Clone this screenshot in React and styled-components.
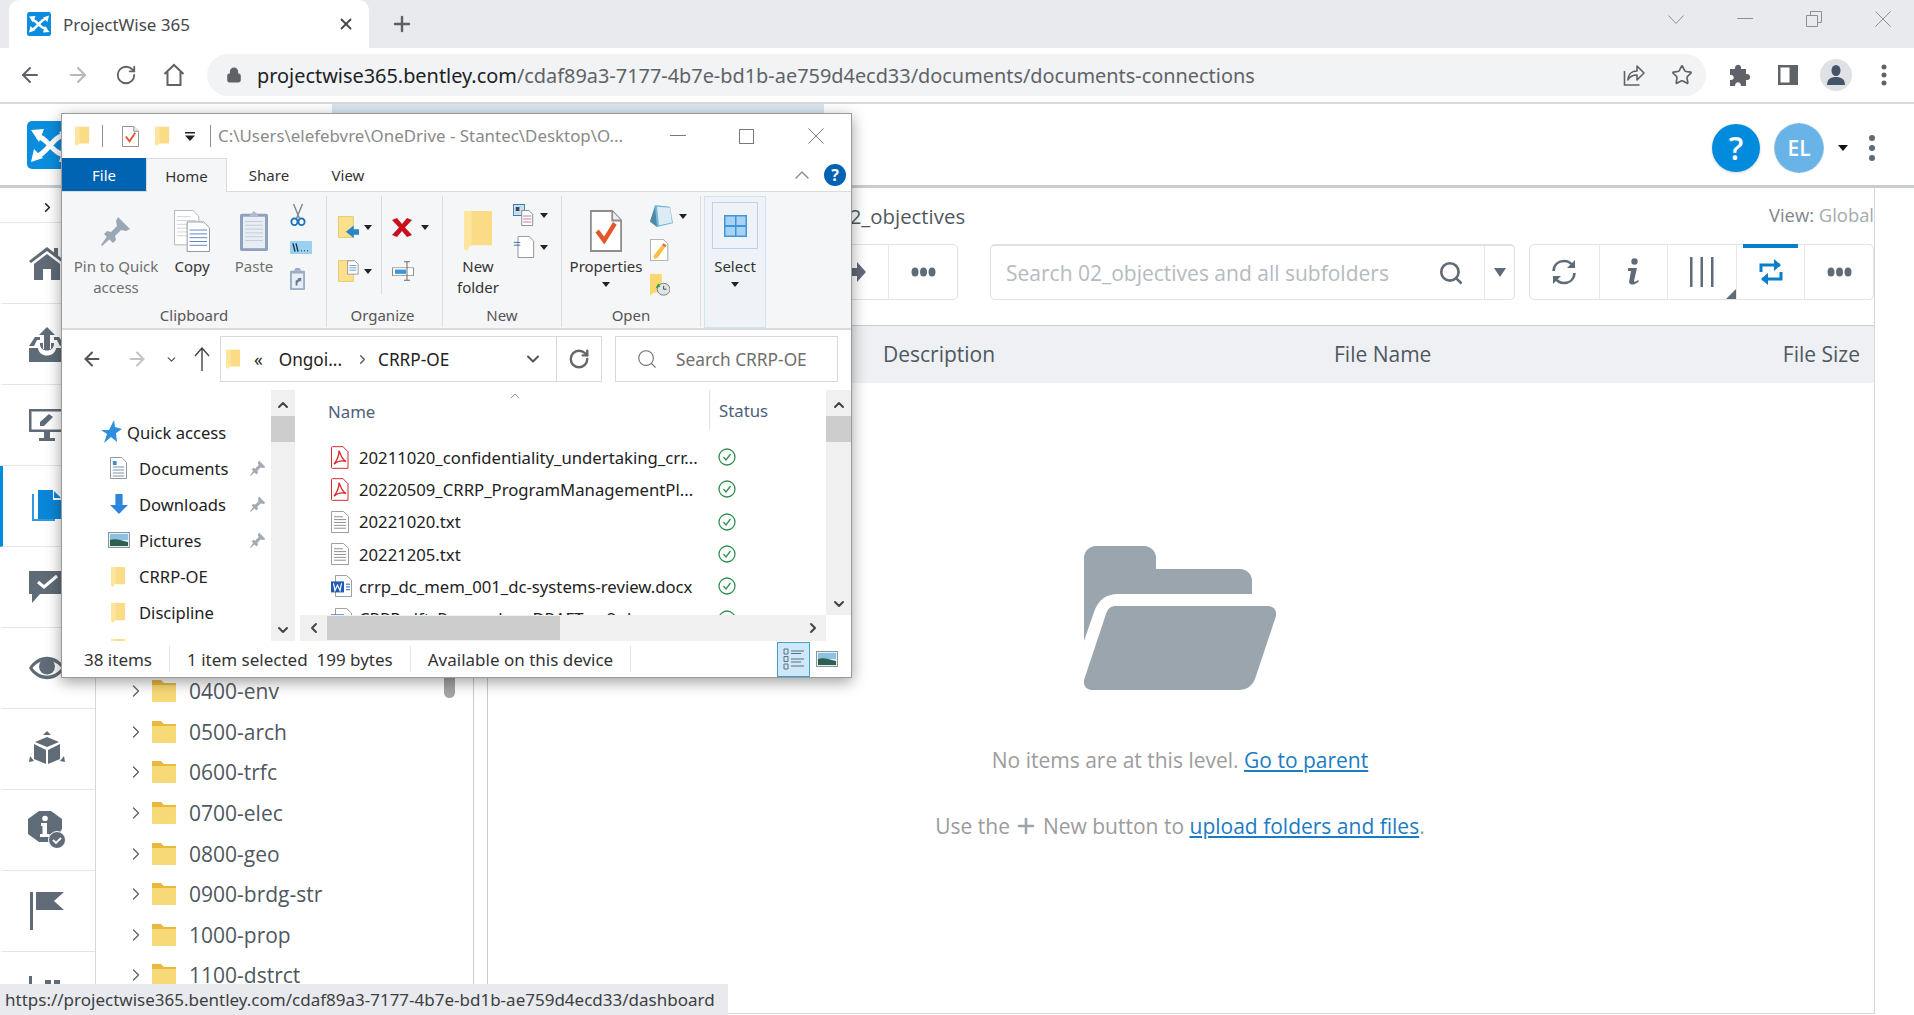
import React from 'react';
import styled, { createGlobalStyle } from 'styled-components';
import { ArrowLeft, ArrowRight, RotateCw, ChevronRight, ChevronDown, ChevronUp, ChevronLeft, Star, Lock, X, Plus, Search } from 'lucide-react';

const Global = createGlobalStyle`
  html, body { margin: 0; padding: 0; background: #fff; overflow: hidden; }
  * { box-sizing: border-box; }
  #root { width: 1914px; height: 1015px; }
`;

const SEGOE = `'Noto Sans', 'Open Sans', sans-serif`;
const OPEN = `'Open Sans', 'Noto Sans', sans-serif`;

const Screen = styled.div`
  position: relative;
  width: 1914px;
  height: 1015px;
  display: flex;
  flex-direction: column;
  overflow: hidden;
  font-family: ${OPEN};
  background: #fff;
`;

/* browser chrome */
const TabStrip = styled.div`
  height: 48px;
  background: #e8eaed;
  display: flex;
  align-items: stretch;
  padding-left: 9px;
  flex: none;
`;
const Tab = styled.div`
  width: 360px;
  background: #fff;
  border-radius: 10px 10px 0 0;
  display: flex;
  align-items: center;
  padding-left: 18px;
  gap: 12px;
  font-family: ${SEGOE};
  font-size: 17px;
  color: #45494e;
`;
const TabTitle = styled.span`
  flex: 1;
`;
const TabClose = styled.span`
  display: flex;
  margin-right: 14px;
  color: #44474a;
`;
const NewTab = styled.span`
  display: flex;
  align-items: center;
  margin-left: 21px;
  color: #5a5e63;
`;
const WindowButtons = styled.div`
  margin-left: auto;
  margin-right: -3px;
  display: flex;
  align-items: flex-start;
  padding-top: 11px;
  color: #8d9095;
`;
const WinBtn = styled.span`
  width: 69px;
  height: 16px;
  display: flex;
  align-items: center;
  justify-content: center;
`;
const BrowserBar = styled.div`
  height: 56px;
  flex: none;
  display: flex;
  align-items: flex-start;
  padding: 6px 6px 0;
  background: #fff;
  border-bottom: 2px solid #dadada;
`;
const BarBtn = styled.span`
  width: 48px;
  height: 42px;
  flex: none;
  display: flex;
  align-items: center;
  justify-content: center;
  color: ${(p) => p.$color || '#5f6368'};
`;
const Omnibox = styled.div`
  width: 1499px;
  height: 42px;
  margin: 0 10px 0 9px;
  flex: none;
  border-radius: 21px;
  background: #f1f3f4;
  display: flex;
  align-items: center;
  padding-left: 19px;
  color: #5f6368;
`;
const Url = styled.div`
  flex: 1;
  margin-left: 15px;
  font-family: ${SEGOE};
  font-size: 19.9px;
  white-space: nowrap;
  color: #5f6368;
  b { font-weight: 400; color: #202124; }
`;
const Avatar = styled.span`
  width: 32px;
  height: 32px;
  border-radius: 50%;
  background: #dfe1e5;
  display: flex;
  align-items: center;
  justify-content: center;
`;

/* projectwise page */
const AppHeader = styled.header`
  height: 84px;
  flex: none;
  display: flex;
  align-items: center;
  padding: 0 39px 0 27px;
  border-bottom: 3px solid #c9ccd1;
  position: relative;
`;
const HeaderStrip = styled.div`
  position: absolute;
  left: 332px;
  top: 0;
  width: 492px;
  height: 10px;
  background: #d9e6ef;
`;
const LogoBox = styled.div`
  width: 48px;
  height: 48px;
  display: flex;
  margin-top: 1px;
`;
const HelpCircle = styled.div`
  width: 48px;
  height: 48px;
  border-radius: 50%;
  margin-left: auto;
  background: #008bdc;
  color: #fff;
  font-size: 32px;
  font-weight: 600;
  display: flex;
  align-items: center;
  justify-content: center;
  margin-top: 6px;
  box-shadow: 0 1px 3px rgba(0, 0, 0, .18);
`;
const UserCircle = styled.div`
  width: 48px;
  height: 48px;
  border-radius: 50%;
  margin-left: 15px;
  background: #68b3e8;
  color: #fff;
  font-size: 21px;
  font-weight: 600;
  display: flex;
  align-items: center;
  justify-content: center;
  margin-top: 6px;
  box-shadow: 0 0 0 1px #8fbfe0;
`;
const UserCaret = styled.span`
  width: 0;
  height: 0;
  margin: 6px 0 0 15px;
  border-left: 5px solid transparent;
  border-right: 5px solid transparent;
  border-top: 6px solid #111;
`;
const Kebab = styled.span`
  display: flex;
  flex-direction: column;
  gap: 4px;
  margin: 6px 0 0 21px;
  i { width: 6px; height: 6px; border-radius: 50%; background: #5f6b76; }
`;
const Main = styled.div`
  flex: 1;
  display: flex;
  min-height: 0;
`;
const SideNav = styled.nav`
  width: 96px;
  flex: none;
  border-right: 1px solid #d5d7da;
  display: flex;
  flex-direction: column;
  overflow: hidden;
`;
const SideToggle = styled.div`
  height: 35px;
  flex: none;
  display: flex;
  align-items: center;
  justify-content: center;
  border-bottom: 1px solid #e3e5e8;
  color: #222;
  padding-top: 4px;
`;
const SideItem = styled.div`
  height: 81px;
  flex: none;
  display: flex;
  align-items: center;
  justify-content: center;
  border-bottom: 1px solid #e3e5e8;
  border-left: 3px solid ${(p) => (p.$active ? '#008bdc' : 'transparent')};
  padding-right: 4px;
`;
const TreePanel = styled.div`
  width: 378px;
  flex: none;
  position: relative;
  padding-top: 483px;
  border-right: 1px solid #c8cace;
  overflow: hidden;
`;
const TreeThumb = styled.div`
  position: absolute;
  right: 18px;
  top: 440px;
  width: 11px;
  height: 70px;
  border-radius: 0 0 6px 6px;
  background: #a4a4a4;
`;
const TreeRow = styled.div`
  height: 40.6px;
  display: flex;
  align-items: center;
  padding-left: 30px;
  font-size: 21px;
  color: #4f5860;
`;
const TreeChevron = styled.span`
  display: flex;
  width: 26px;
  color: #596269;
`;
const TreeFolder = styled.span`
  display: flex;
  width: 37px;
`;
const Gutter = styled.div`
  width: 13px;
  flex: none;
`;
const Content = styled.section`
  width: 1388px;
  flex: none;
  border-left: 1px solid #c8cace;
  border-right: 1px solid #d5d7da;
  border-bottom: 1px solid #d5d7da;
  display: flex;
  flex-direction: column;
  margin-bottom: 1px;
`;
const TitleRow = styled.div`
  height: 56px;
  flex: none;
  display: flex;
  align-items: center;
  padding-left: 350px;
`;
const FolderTitle = styled.span`
  font-size: 20.4px;
  color: #4f5860;
`;
const ViewLabel = styled.span`
  margin-left: auto;
  font-size: 18.4px;
  color: #a4aaaf;
  margin-top: -4px;
  b { font-weight: 400; color: #80868c; }
`;
const ToolRow = styled.div`
  height: 56px;
  flex: none;
  display: flex;
  justify-content: flex-end;
`;
const BtnGroup = styled.div`
  display: flex;
  height: 56px;
  border: 1px solid #dfe1e4;
  border-radius: 5px;
  margin-left: ${(p) => p.$gap}px;
  background: #fff;
`;
const ToolBtn = styled.div`
  width: 68.6px;
  position: relative;
  display: flex;
  align-items: center;
  justify-content: center;
  padding-left: ${(p) => p.$shift || 0}px;
  color: #5f6b76;
  & + & { border-left: 1px solid #e4e6e8; }
`;
const ActiveBar = styled.span`
  position: absolute;
  left: 6px;
  right: 6px;
  top: -1px;
  height: 4px;
  background: #0a7fc9;
`;
const CornerMark = styled.span`
  position: absolute;
  right: 0;
  bottom: 0;
  width: 0;
  height: 0;
  border-left: 10px solid transparent;
  border-bottom: 10px solid #5f6b76;
`;
const SearchBox = styled.div`
  width: 525px;
  height: 56px;
  margin-left: 32px;
  display: flex;
  border: 1px solid #dfe1e4;
  border-top: 2px solid #dfe1e4;
  border-radius: 5px;
`;
const SearchText = styled.div`
  flex: 1;
  display: flex;
  align-items: center;
  padding: 0 20px 0 15px;
  font-size: 21px;
  color: #b5babf;
  span { flex: 1; }
`;
const SearchCaret = styled.div`
  width: 30px;
  border-left: 1px solid #e4e6e8;
  display: flex;
  align-items: center;
  justify-content: center;
  &::after {
    content: '';
    border-left: 6px solid transparent;
    border-right: 6px solid transparent;
    border-top: 9px solid #5f6b76;
  }
`;
const TableHead = styled.div`
  height: 58px;
  margin-top: 25px;
  flex: none;
  display: grid;
  grid-template-columns: 451px 1fr auto;
  align-items: center;
  padding: 0 14px 2px 395px;
  background: #eef0f3;
  border-top: 1px solid #c9ccd1;
  font-size: 21px;
  color: #4f5860;
`;
const Empty = styled.div`
  flex: 1;
  display: flex;
  flex-direction: column;
  align-items: center;
  padding: 163px 2px 0 0;
  font-size: 21px;
  color: #9c9c9c;
`;
const EmptyLine = styled.p`
  margin: ${(p) => p.$top}px 0 0;
  line-height: 28px;
  display: flex;
  align-items: center;
  white-space: pre;
  a { color: #1b7cc3; text-decoration: underline; }
`;
const InlinePlus = styled.span`
  display: flex;
  margin: 0 -1px;
  color: #9ba5ad;
`;
const StatusTip = styled.div`
  position: absolute;
  left: 0;
  bottom: 0;
  width: 728px;
  height: 31px;
  background: #e8eaed;
  font-family: ${SEGOE};
  font-size: 17px;
  color: #3c4043;
  display: flex;
  align-items: center;
  padding-left: 5px;
  white-space: nowrap;
`;

/* explorer window */
const Explorer = styled.div`
  position: absolute;
  left: 61px;
  top: 113px;
  width: 791px;
  height: 565px;
  background: #fff;
  border: 1px solid #9a9a9a;
  box-shadow: 0 4px 14px rgba(0, 0, 0, .38);
  font-family: ${SEGOE};
  color: #222;
  display: flex;
  flex-direction: column;
  font-size: 16.6px;
`;
const ExTitle = styled.div`
  height: 44px;
  flex: none;
  display: flex;
  align-items: center;
  position: relative;
  padding-left: 13px;
`;
const QuickBtn = styled.span`
  display: flex;
  align-items: center;
  justify-content: center;
  margin-right: ${(p) => p.$mr || 0}px;
`;
const VSep = styled.span`
  width: 1px;
  height: 22px;
  background: #8e8e8e;
  margin-right: ${(p) => p.$mr}px;
`;
const ExPath = styled.span`
  color: #8a8a8a;
  font-size: 16.9px;
  white-space: nowrap;
  margin-top: -2px;
`;
const ExWinBtns = styled.div`
  position: absolute;
  right: 1px;
  top: 14px;
  display: flex;
  color: #7a7a7a;
`;
const ExWinBtn = styled.span`
  width: 69px;
  height: 16px;
  display: flex;
  align-items: center;
  justify-content: center;
`;
const ExTabs = styled.div`
  height: 34px;
  flex: none;
  display: flex;
  align-items: stretch;
  border-bottom: 1px solid #dadbdc;
`;
const ExTab = styled.div`
  width: ${(p) => p.$w}px;
  display: flex;
  align-items: center;
  justify-content: center;
  font-size: 15px;
  color: ${(p) => (p.$file ? '#fff' : '#333')};
  background: ${(p) => (p.$file ? '#0063b1' : p.$on ? '#f5f6f7' : 'transparent')};
  ${(p) => p.$on && `
    border: 1px solid #dadbdc;
    border-bottom: 0;
    margin-bottom: -1px;
  `}
`;
const ExTabEnd = styled.div`
  margin-left: auto;
  display: flex;
  align-items: center;
  gap: 10px;
  padding-right: 5px;
  color: #8a8a8a;
`;
const HelpDot = styled.span`
  width: 22px;
  height: 22px;
  border-radius: 50%;
  background: #0063b1;
  color: #fff;
  font-weight: 700;
  font-size: 16px;
  display: flex;
  align-items: center;
  justify-content: center;
`;
const Ribbon = styled.div`
  height: 138px;
  flex: none;
  display: flex;
  background: #f5f6f7;
  border-bottom: 2px solid #dadbdc;
`;
const RGroup = styled.div`
  width: ${(p) => p.$w}px;
  margin: 4px 0 1px;
  flex: none;
  display: flex;
  flex-direction: column;
  border-right: 1px solid #dddee0;
`;
const RTools = styled.div`
  height: 107px;
  flex: none;
  display: flex;
  padding-left: ${(p) => p.$pl || 0}px;
`;
const RLabel = styled.div`
  height: 24px;
  line-height: 24px;
  text-align: center;
  color: #555;
  font-size: 15px;
  padding-right: ${(p) => p.$nudge || 0}px;
`;
const LargeTool = styled.div`
  width: ${(p) => p.$w}px;
  flex: none;
  display: flex;
  flex-direction: column;
  align-items: center;
  padding-top: 10px;
  font-size: 15px;
  line-height: 21px;
  text-align: center;
  color: ${(p) => (p.$dim ? '#6f6f6f' : '#333')};
`;
const ToolIcon = styled.div`
  height: 50px;
  display: flex;
  align-items: center;
  justify-content: center;
`;
const SmallCol = styled.div`
  width: ${(p) => p.$w}px;
  flex: none;
  padding-top: ${(p) => p.$top}px;
  padding-left: ${(p) => p.$pl || 0}px;
  ${(p) => p.$line && 'border-right: 1px solid #d9dadc; height: 92%;'}
`;
const SmallTool = styled.div`
  height: ${(p) => p.$h}px;
  display: flex;
  align-items: center;
  gap: ${(p) => p.$gap || 5}px;
`;
const Caret = styled.span`
  width: 0;
  height: 0;
  border-left: 4px solid transparent;
  border-right: 4px solid transparent;
  border-top: 5px solid #222;
  flex: none;
`;
const CaretRow = styled.div`
  height: 14px;
  display: flex;
  align-items: center;
  justify-content: center;
`;
const SelectBtn = styled.div`
  width: 62px;
  height: 132px;
  margin: 4px 0 0 3px;
  background: #eff3f7;
  border: 1px solid #cfe3f2;
  display: flex;
  flex-direction: column;
  align-items: center;
  padding-top: 5px;
  font-size: 15px;
  line-height: 21px;
  color: #333;
`;
const SelectTile = styled.div`
  width: 46px;
  height: 47px;
  border: 1px solid #b9d3e8;
  display: flex;
  align-items: center;
  justify-content: center;
  margin-bottom: 7px;
`;
const ExAddress = styled.div`
  height: 60px;
  flex: none;
  display: flex;
  align-items: flex-start;
  padding-top: 6px;
`;
const NavArrow = styled.span`
  width: ${(p) => p.$w}px;
  height: 46px;
  flex: none;
  display: flex;
  align-items: center;
  justify-content: center;
  color: ${(p) => p.$color || '#555'};
`;
const PathBox = styled.div`
  width: 382px;
  height: 46px;
  flex: none;
  border: 1px solid #d9d9d9;
  display: flex;
  align-items: center;
  font-size: 17.2px;
  color: #222;
`;
const PathMain = styled.div`
  width: 335px;
  display: flex;
  align-items: center;
  padding-left: 5px;
`;
const PathBit = styled.span`
  margin-left: ${(p) => p.$ml}px;
  display: flex;
  align-items: center;
  color: ${(p) => p.$color || '#222'};
`;
const PathChevron = styled.span`
  margin-left: auto;
  margin-right: 13px;
  display: flex;
  color: #555;
`;
const PathRefresh = styled.div`
  flex: 1;
  align-self: stretch;
  border-left: 1px solid #d9d9d9;
  display: flex;
  align-items: center;
  justify-content: center;
  color: #666;
`;
const SearchField = styled.div`
  width: 223px;
  height: 46px;
  margin-left: 13px;
  flex: none;
  border: 1px solid #d9d9d9;
  display: flex;
  align-items: center;
  padding-left: 20px;
  gap: 18px;
  color: #6f6f6f;
  font-size: 17.3px;
`;
const Panes = styled.div`
  height: 251px;
  flex: none;
  display: flex;
`;
const NavPane = styled.div`
  width: 209px;
  flex: none;
  padding-top: 24px;
  overflow: hidden;
`;
const NavRow = styled.div`
  height: 36px;
  display: flex;
  align-items: center;
  padding-left: ${(p) => p.$pl}px;
  position: relative;
  font-size: 16.6px;
  color: #222;
  white-space: nowrap;
`;
const NavIcon = styled.span`
  width: ${(p) => p.$w}px;
  flex: none;
  display: flex;
  justify-content: center;
`;
const NavPin = styled.span`
  margin-left: auto;
  margin-right: 5px;
  display: flex;
`;
const VScroll = styled.div`
  width: ${(p) => p.$w}px;
  flex: none;
  height: ${(p) => p.$h}px;
  background: #f0f0f0;
  display: flex;
  flex-direction: column;
  align-items: center;
  color: #444;
`;
const ScrollEnd = styled.span`
  height: 26px;
  flex: none;
  display: flex;
  align-items: center;
  justify-content: center;
  padding-top: 4px;
`;
const VThumb = styled.span`
  width: 100%;
  height: 26px;
  flex: none;
  background: #cdcdcd;
`;
const ScrollGap = styled.span`
  flex: 1;
`;
const FilesArea = styled.div`
  flex: 1;
  min-width: 0;
  margin-left: 5px;
  display: flex;
  flex-direction: column;
`;
const FilesTop = styled.div`
  flex: 1;
  display: flex;
  min-height: 0;
`;
const FilesList = styled.div`
  flex: 1;
  min-width: 0;
  position: relative;
  overflow: hidden;
`;
const SortMark = styled.span`
  position: absolute;
  left: 207px;
  top: -2px;
  display: flex;
  color: #777;
`;
const ColHead = styled.div`
  height: 42px;
  display: flex;
  font-size: 16.8px;
  color: #4c607a;
  align-items: center;
  padding-left: 28px;
`;
const ColName = styled.span`
  width: 381px;
  flex: none;
`;
const ColStatus = styled.span`
  align-self: flex-start;
  height: 40px;
  display: flex;
  align-items: center;
  padding-left: 9px;
  border-left: 1px solid #e2e2e2;
  flex: 1;
`;
const FileRow = styled.div`
  height: 32.3px;
  margin-top: ${(p) => p.$first || 0}px;
  display: flex;
  align-items: center;
  padding-left: 31px;
  font-size: 16.7px;
  color: #222;
  white-space: nowrap;
`;
const FileIcon = styled.span`
  width: 28px;
  flex: none;
  display: flex;
`;
const FileName = styled.span`
  width: 359px;
  flex: none;
`;
const HScroll = styled.div`
  height: 26px;
  flex: none;
  margin-right: 25px;
  display: flex;
  align-items: center;
  background: #f0f0f0;
  color: #444;
`;
const HEnd = styled.span`
  width: 27px;
  flex: none;
  display: flex;
  justify-content: center;
`;
const HThumb = styled.span`
  width: 233px;
  height: 24px;
  background: #cdcdcd;
`;
const ExStatus = styled.div`
  height: 36px;
  flex: none;
  display: flex;
  align-items: center;
  font-size: 17px;
  color: #333;
  position: relative;
`;
const StatusCell = styled.span`
  display: flex;
  align-items: center;
  height: 26px;
  padding: 0 ${(p) => p.$pr}px 0 ${(p) => p.$pl}px;
  border-right: 1px solid #e4e4e4;
`;
const ViewToggles = styled.div`
  margin-left: auto;
  display: flex;
  align-self: stretch;
  padding-right: 8px;
  align-items: center;
`;
const ViewToggle = styled.span`
  width: ${(p) => p.$w}px;
  height: 35px;
  display: flex;
  align-items: center;
  justify-content: center;
  background: ${(p) => (p.$on ? '#cfe8f8' : 'transparent')};
  border: ${(p) => (p.$on ? '1px solid #3fa0c8' : '0')};
`;

/* drawings */
const Logo = ({ size = 48 }) => (
  <svg width={size} height={size} viewBox="0 0 48 48">
    <rect width="48" height="48" rx="5" fill="#0a8ddf" />
    <g stroke="#fff" strokeWidth="5" fill="none">
      <path d="M9 15 C20 15 25 34 40 34" />
      <path d="M9 36 C20 33 26 15 39 13" />
    </g>
    <path d="M4 9l13-1-5 13zM44 7l-3 13-9-9zM4 41l3-13 9 9zM45 40l-13 1 4-13z" fill="#fff" />
  </svg>
);
const ChromeShare = () => (
  <svg width="22" height="24" viewBox="0 0 22 24" fill="none" stroke="#5f6368" strokeWidth="1.6">
    <path d="M1.500 8v14h15" />
    <path d="M5 17c0-6 4-9 9-9V3l7 7-7 7v-5c-4 0-7 1-9 5z" strokeLinejoin="round" />
  </svg>
);
const Puzzle = () => (
  <svg width="22" height="24" viewBox="0 0 22 24" fill="#5f6368">
    <path d="M1 6h5c-1-5 7-6 6 0h5v5c5-1 6 7 0 6v6h-5c0-5-6-5-6 0H1v-6c5 1 5-6 0-5z" />
  </svg>
);
const SidePanel = () => (
  <svg width="20" height="20" viewBox="0 0 20 20">
    <rect width="20" height="20" fill="#5f6368" />
    <rect x="2.500" y="2.500" width="9" height="15" fill="#fff" />
  </svg>
);
const ProfileIcon = () => (
  <svg width="20" height="22" viewBox="0 0 20 22" fill="#44546a">
    <ellipse cx="10" cy="6.500" rx="4.500" ry="5.500" />
    <path d="M1 21c0-6 4-8 9-8s9 2 9 8z" />
  </svg>
);
const RestoreIcon = () => (
  <svg width="16" height="16" viewBox="0 0 16 16" fill="none" stroke="#8d9095">
    <path d="M.5 4.500h11v11H.5zM4.500 4V.5h11v11H12" />
  </svg>
);
const ThinX = ({ w = 16, h = 16, color = '#8d9095' }) => (
  <svg width={w} height={h} viewBox="0 0 16 16" stroke={color} fill="none">
    <path d="M.5.5l15 15M15.500.5L.5 15.500" />
  </svg>
);
const ThinDash = ({ color = '#8d9095' }) => (
  <svg width="16" height="2" viewBox="0 0 16 2"><rect width="16" height="1" fill={color} /></svg>
);
const ThinSquare = () => (
  <svg width="15" height="15" viewBox="0 0 15 15" fill="none" stroke="#7a7a7a"><rect x=".5" y=".5" width="14" height="14" /></svg>
);
const ThinV = () => (
  <svg width="16" height="9" viewBox="0 0 16 9" stroke="#8d9095" fill="none"><path d="M.5.5L8 8.500 15.500.5" /></svg>
);
const DarkMenu = () => (
  <svg width="6" height="22" viewBox="0 0 6 22" fill="#5f6368">
    <circle cx="3" cy="3" r="2.500" /><circle cx="3" cy="11" r="2.500" /><circle cx="3" cy="19" r="2.500" />
  </svg>
);
const HomeOutline = () => (
  <svg width="22" height="24" viewBox="0 0 22 24" fill="none" stroke="#5f6368" strokeWidth="2">
    <path d="M1.500 11L11 2l9.500 9M4.500 9v13h13V9" />
  </svg>
);
const ArrowUpThin = () => (
  <svg width="16" height="24" viewBox="0 0 16 24" fill="none" stroke="#444" strokeWidth="1.400"><path d="M8 24V1M1 9l7-8 7 8" /></svg>
);

const SIDE = '#5f6b76';
const HomeIcon = () => (
  <svg width="36" height="34" viewBox="0 0 36 34" fill={SIDE}>
    <path d="M18 1 0 15l2 2L18 5l16 12 2-2-7-5.500V2h-4v4.500z" />
    <path d="M5 18 18 8l13 10v16h-9V23h-8v11H5z" />
  </svg>
);
const UploadTrayIcon = () => (
  <svg width="36" height="36" viewBox="0 0 36 36" fill={SIDE}>
    <path d="M0 22h9c1 10 17 10 18 0h9v14H0z" />
    <path d="M0 20 6 11h5v3H8l-3 6zM36 20 30 11h-5v3h3l3 6z" />
    <path d="M18 1l8 8h-5v14h-6V9h-5z" />
    <path d="M11 17h3v6h8v-6h3c1 10-15 10-14 0z" />
  </svg>
);
const MonitorEditIcon = () => (
  <svg width="36" height="34" viewBox="0 0 36 34" fill={SIDE}>
    <path d="M0 1h36v23H0zM2.500 3.500v18h31v-18z" fillRule="evenodd" />
    <path d="M15 24h6v6h5v3H10v-3h5z" />
    <path d="M11 18v-4l9-8 4 3-9 9z" />
  </svg>
);
const DocsIcon = () => (
  <svg width="30" height="32" viewBox="0 0 30 32">
    <path d="M1 4v26h22" fill="none" stroke="#2f9ae0" strokeWidth="2" />
    <path d="M6 0h15l8 9v20H6z" fill="#0a86d8" />
    <path d="M21 0h2l7 8v2h-9z" fill="#fff" />
    <path d="M22 1l7 7h-7z" fill="#0a86d8" />
  </svg>
);
const CommentCheckIcon = () => (
  <svg width="36" height="36" viewBox="0 0 36 36">
    <path d="M0 2h36v23H11l-8 9v-9H0z" fill={SIDE} />
    <path d="M9 13l6 5 13-11" fill="none" stroke="#fff" strokeWidth="3" />
  </svg>
);
const EyeIcon = () => (
  <svg width="36" height="24" viewBox="0 0 36 24">
    <path d="M0 12C9-3 27-3 36 12 27 27 9 27 0 12z" fill={SIDE} />
    <path d="M3.500 12C11 2 25 2 32.500 12 25 22 11 22 3.500 12z" fill="#fff" />
    <circle cx="18" cy="10.500" r="8" fill={SIDE} />
  </svg>
);
const CubeIcon = () => (
  <svg width="36" height="36" viewBox="0 0 36 36" fill={SIDE}>
    <path d="M18 0l4 4h-8zM0 31l1-6 4 5zM36 31l-1-6-4 5z" />
    <path d="M18 6l12 5-12 5-12-5zM5 13l12 6v14L5 28zM31 13l-12 6v14l12-5z" />
  </svg>
);
const InfoBadgeIcon = () => (
  <svg width="38" height="38" viewBox="0 0 38 38">
    <path d="M11 0h12l11 8v10L26 31H11L0 23V8z" fill={SIDE} />
    <circle cx="17" cy="7.500" r="2.800" fill="#fff" />
    <path d="M13 12h6v11h2.500v3H12v-3h2.500v-8H13z" fill="#fff" />
    <circle cx="29" cy="29" r="8.500" fill={SIDE} stroke="#fff" strokeWidth="1" />
    <path d="M25 29l3 3 5-5" stroke="#fff" strokeWidth="1.800" fill="none" />
  </svg>
);
const FlagIcon = () => (
  <svg width="34" height="38" viewBox="0 0 34 38" fill={SIDE}>
    <rect x="0" y="0" width="3" height="38" />
    <path d="M6 0h28l-10 9 10 9H6z" />
  </svg>
);
const ChartIcon = () => (
  <svg width="36" height="36" viewBox="0 0 36 36" fill={SIDE}>
    <rect x="0" y="2" width="3" height="34" />
    <rect x="7" y="14" width="6" height="22" />
    <rect x="16" y="6" width="6" height="30" />
    <rect x="25" y="6" width="6" height="30" />
  </svg>
);
const TreeFolderIcon = () => (
  <svg width="24" height="22" viewBox="0 0 24 22">
    <path d="M0 0h9l3 3h12v4H0z" fill="#e8b93c" />
    <rect y="5" width="24" height="17" rx="1" fill="#f8d977" />
  </svg>
);
const BigFolder = () => (
  <svg width="192" height="144" viewBox="0 0 192 144" fill="#9ba5ad">
    <path d="M0 12A12 12 0 0 1 12 0H60A12 12 0 0 1 72 12V23H156A12 12 0 0 1 168 35V48H34C22 48 14 54 10 66L0 95Z" />
    <path d="M32 60H184A8 8 0 0 1 192 70L172 130C169 140 163 144 154 144H8A8 8 0 0 1 0 134L22 68C24 62 27 60 32 60Z" />
  </svg>
);
const SyncIcon = () => (
  <svg width="26" height="28" viewBox="0 0 26 28" fill="none" stroke="#5f6b76" strokeWidth="2.600">
    <path d="M2.500 13C3 6 8 3 13 3c4 0 7 2 9 5" />
    <path d="M23.500 15c-.5 7-5.500 10-10.500 10-4 0-7-2-9-5" />
    <path d="M24 2v8h-8zM2 26v-8h8z" fill="#5f6b76" stroke="none" />
  </svg>
);
const InfoItalic = () => (
  <svg width="16" height="28" viewBox="0 0 16 28" fill="#5f6b76">
    <circle cx="9.500" cy="3.500" r="3.200" />
    <path d="M3 10h9L9 23c0 1 2 1 4-1l1 1c-3 4-9 5-10 1l2-11H3z" />
  </svg>
);
const ColumnsIcon = () => (
  <svg width="24" height="30" viewBox="0 0 24 30" fill="#5f6b76">
    <rect x="0" width="2.500" height="30" /><rect x="10.500" width="2.500" height="30" /><rect x="21" width="2.500" height="30" />
  </svg>
);
const SwapIcon = () => (
  <svg width="26" height="26" viewBox="0 0 26 26" fill="none" stroke="#0a7fc9" strokeWidth="3">
    <path d="M3 13V6h19M23 13v7H4" />
    <path d="M16 0l7 6-7 6zM10 14l-7 6 7 6z" fill="#0a7fc9" stroke="none" />
  </svg>
);
const DotsIcon = () => (
  <svg width="25" height="10" viewBox="0 0 25 10" fill="#5f6b76">
    <ellipse cx="4" cy="5" rx="3.500" ry="4.500" /><ellipse cx="12.500" cy="5" rx="3.500" ry="4.500" /><ellipse cx="21" cy="5" rx="3.500" ry="4.500" />
  </svg>
);
const RightBlockArrow = () => (
  <svg width="18" height="20" viewBox="0 0 18 20" fill="#5f6b76"><path d="M0 6h9V0l9 10-9 10v-6H0z" /></svg>
);

/* explorer icons */
const YellowFolder = ({ w = 15, h = 20 }) => (
  <svg width={w} height={h} viewBox="0 0 16 23" preserveAspectRatio="none">
    <path d="M0 1h15v19H4z" fill="#fbdc86" />
    <path d="M0 1l5 0v18l-3 4-2-2z" fill="#fde59d" />
  </svg>
);
const CheckDoc = ({ w = 17, h = 21, sw = 2 }) => (
  <svg width={w} height={h} viewBox="0 0 18 22" preserveAspectRatio="none">
    <path d="M.5.5h12l5 5v16H.5z" fill="#fff" stroke="#8d8d8d" />
    <path d="M12.500.5v5h5" fill="#eee" stroke="#8d8d8d" />
    <path d="M4 11l4 5 6-9" fill="none" stroke="#e2572b" strokeWidth={sw} />
  </svg>
);
const QuickCaret = () => (
  <svg width="10" height="10" viewBox="0 0 10 10" fill="#222"><rect y="1" width="10" height="1.500" /><path d="M0 4.500h10L5 10z" /></svg>
);
const Pin = ({ size = 30, color = '#9aa7b7' }) => (
  <svg width={size} height={size} viewBox="0 0 30 30" fill={color}>
    <path d="M17 1L29 13 25 15 20 14 14 20 15 24 12 27 3 18 6 15 10 16 16 10 15 5Z" />
    <path d="M7 19l3 3L1 30l-1-1z" />
  </svg>
);
const CopyDocs = () => (
  <svg width="36" height="42" viewBox="0 0 37 44" preserveAspectRatio="none">
    <path d="M.5.5h19l6 6v30H.5z" fill="#fff" stroke="#b1b5bb" />
    <path d="M3 7h14M3 11h20M3 15h20M3 19h20M3 23h20M3 27h20" stroke="#cfd3d8" />
    <path d="M13.500 12.500h17l6 6v25h-23z" fill="#fff" stroke="#8f949a" />
    <path d="M16 21h18M16 25h18M16 29h18M16 33h18M16 37h18" stroke="#5a86c5" />
  </svg>
);
const Clipboard = () => (
  <svg width="30" height="42" viewBox="0 0 30 44" preserveAspectRatio="none">
    <rect x="1" y="4" width="28" height="39" rx="2" fill="#8fa2bd" />
    <rect x="4" y="7" width="22" height="33" fill="#e9edf4" />
    <path d="M6 12h18M6 16h18M6 20h18M6 24h18M6 28h18M6 32h18" stroke="#c3cddc" />
    <path d="M11 5l4-4 4 4v2h-8z" fill="#b0bccd" />
  </svg>
);
const Scissors = () => (
  <svg width="16" height="22" viewBox="0 0 18 26" preserveAspectRatio="none" fill="none">
    <path d="M4 0l7 18M14 0L7 18" stroke="#7e8791" strokeWidth="1.600" />
    <ellipse cx="5" cy="21" rx="3.500" ry="4" stroke="#1c72b8" strokeWidth="2" />
    <ellipse cx="13" cy="21" rx="3.500" ry="4" stroke="#1c72b8" strokeWidth="2" />
  </svg>
);
const CopyPath = () => (
  <svg width="22" height="13" viewBox="0 0 22 16" preserveAspectRatio="none">
    <rect width="22" height="16" fill="#9bd0ee" />
    <path d="M3 3l2 10M6 3l2 10" stroke="#17365c" strokeWidth="1.400" />
    <path d="M11 12h1M14 12h1M17 12h1" stroke="#17365c" strokeWidth="1.400" />
  </svg>
);
const ShortcutBoard = () => (
  <svg width="15" height="22" viewBox="0 0 16 24" preserveAspectRatio="none">
    <rect y="3" width="16" height="21" rx="1" fill="#9bacc4" />
    <rect x="2" y="6" width="12" height="16" fill="#e9edf4" />
    <path d="M6 0h4l2 3H4z" fill="#9bacc4" />
    <path d="M6 19v-5l3-2-1-1h4v4l-1-1-3 2v3z" fill="#5f7d9f" />
  </svg>
);
const MoveTo = ({ copy }) => (
  <svg width="21" height="22" viewBox="0 0 24 28" preserveAspectRatio="none">
    <path d="M.5.500h17v27H.5z" fill="#fbe08e" stroke="#e6c25a" />
    {copy ? (
      <g>
        <path d="M11 1h8l4 4v13H11z" fill="#fff" stroke="#8b8b8b" />
        <path d="M13 7h8M13 10h8M13 13h8" stroke="#5a86c5" />
      </g>
    ) : (
      <path d="M9 20l9-8v5h6v7h-6v4z" fill="#2a85c9" />
    )}
  </svg>
);
const RedX = () => (
  <svg width="20" height="19" viewBox="0 0 20 28" preserveAspectRatio="none" fill="#c8111d">
    <path d="M0 3l5-3 5 9 5-9 5 3-7 11 7 11-5 3-5-9-5 9-5-3 7-11z" />
  </svg>
);
const Rename = () => (
  <svg width="22" height="20" viewBox="0 0 22 28" preserveAspectRatio="none" fill="none">
    <rect x=".5" y="9.500" width="21" height="11" fill="#fff" stroke="#8b8b8b" />
    <rect x="3" y="12" width="11" height="6" fill="#3f95d6" />
    <path d="M12 1h6M15 1v26M12 27h6" stroke="#555" />
  </svg>
);
const NewFolderIcon = () => (
  <svg width="28" height="40" viewBox="0 0 30 42" preserveAspectRatio="none">
    <path d="M2 0h28v36H6z" fill="#fbdc86" />
    <path d="M0 0h8v34l-5 8-3-3z" fill="#fde59d" />
  </svg>
);
const NewItem = () => (
  <svg width="22" height="22" viewBox="0 0 24 22" preserveAspectRatio="none">
    <rect x=".5" y=".5" width="12" height="11" fill="#c8def0" stroke="#3a7db5" />
    <rect x="3" y="3" width="4" height="4" fill="#444" />
    <path d="M9.500 6.500h8l4 4v11h-12z" fill="#fff" stroke="#8b8b8b" />
    <path d="M11 12h9M11 15h9M11 18h9" stroke="#c077a8" />
  </svg>
);
const EasyAccess = () => (
  <svg width="22" height="22" viewBox="0 0 24 24" preserveAspectRatio="none">
    <path d="M5.500.5h12l5 5v18h-17z" fill="#fff" stroke="#8b8b8b" />
    <path d="M1 7h7M1 10h7" stroke="#2a6db0" />
  </svg>
);
const Notepad = () => (
  <svg width="24" height="22" viewBox="0 0 24 24" preserveAspectRatio="none">
    <path d="M5 0l15 2 3 18-16 4-7-6z" fill="#74b9d6" />
    <path d="M7 2l13 1 2 16-13 3z" fill="#dcecf5" />
    <path d="M0 18l7 6L5 2z" fill="#4d8aa8" />
  </svg>
);
const EditDoc = () => (
  <svg width="19" height="22" viewBox="0 0 24 32" preserveAspectRatio="none">
    <path d="M.5.5h16l6 6v25H.5z" fill="#fff" stroke="#8b8b8b" />
    <path d="M4 25l2 4 4-2 9-15-4-3z" fill="#f5c243" />
    <path d="M15 9l4 3 2-3-4-3z" fill="#e26b4a" />
  </svg>
);
const HistoryFolder = () => (
  <svg width="20" height="22" viewBox="0 0 22 26" preserveAspectRatio="none">
    <path d="M0 0h13v22H4l-4 4z" fill="#fbd86f" />
    <circle cx="15" cy="18" r="7" fill="#dfe4e4" stroke="#6a7a6e" />
    <path d="M15 14v4h3" stroke="#333" fill="none" />
    <path d="M6 17a9 9 0 0 1 4-6l1 4z" fill="#3a9a4a" />
  </svg>
);
const TileIcon = () => (
  <svg width="23" height="22" viewBox="0 0 23 22">
    <rect width="23" height="22" fill="#3e97da" />
    <path d="M1.500 1.500h9.500v8.500H1.500zM12.500 1.500H21.500v8.500h-9zM1.500 12h9.500v8.500H1.500zM12.500 12H21.500v8.500h-9z" fill="#a8d2f2" />
  </svg>
);
const QuickStar = () => (
  <svg width="22" height="24" viewBox="0 0 22 24">
    <path d="M14 0l1 7 7 2-6 4 1 9-6-5-7 6 3-9-6-4h8z" fill="#2e8fe0" />
  </svg>
);
const DocumentsIcon = () => (
  <svg width="17" height="22" viewBox="0 0 18 22" preserveAspectRatio="none">
    <path d="M.5.5h12l5 5v16H.5z" fill="#fff" stroke="#8f949a" />
    <rect x="3" y="4" width="4" height="4" fill="#3f8ed0" />
    <path d="M3 10h12M3 13h12M3 16h12M3 19h12" stroke="#7a8ea6" />
  </svg>
);
const DownloadIcon = () => (
  <svg width="18" height="20" viewBox="0 0 20 22" preserveAspectRatio="none" fill="#2e86dc"><path d="M6 0h8v12h6L10 22 0 12h6z" /></svg>
);
const PicturesIcon = () => (
  <svg width="22" height="16" viewBox="0 0 22 16">
    <rect x=".5" y=".5" width="21" height="15" fill="#e4eff5" stroke="#8f949a" />
    <rect x="2" y="2" width="18" height="6" fill="#8cc1e4" />
    <path d="M2 8c6-2 12 1 18 2v4H2z" fill="#2f5f4f" />
  </svg>
);
const PdfIcon = () => (
  <svg width="18" height="23" viewBox="0 0 18 24" preserveAspectRatio="none">
    <path d="M1.500.7h10.500l5 5.300v17.300h-15.500a1 1 0 0 1-1-1V1.700a1 1 0 0 1 1-1z" fill="#fff" stroke="#d7262b" />
    <path d="M8 5c2 5 3 9 7 11-4-1-9 0-12 3 3-4 5-9 5-14z" fill="none" stroke="#d7262b" strokeWidth="1.300" />
  </svg>
);
const TxtIcon = () => (
  <svg width="18" height="22" viewBox="0 0 18 23" preserveAspectRatio="none">
    <path d="M.5.5h12l5 5v17H.5z" fill="#fff" stroke="#9a9a9a" />
    <path d="M3 6h9M3 9h12M3 12h12M3 15h12M3 18h12" stroke="#8f8f8f" />
  </svg>
);
const WordIcon = () => (
  <svg width="21" height="22" viewBox="0 0 21 24" preserveAspectRatio="none">
    <path d="M4.500.5h11l5 5v18h-16z" fill="#fff" stroke="#9a9a9a" />
    <rect y="7" width="13" height="12" fill="#1f5bb5" />
    <path d="M2.500 9l1.500 8 2.500-6 2.500 6 1.500-8" fill="none" stroke="#fff" strokeWidth="1.200" />
    <path d="M15 10h4M15 13h4M15 16h4" stroke="#1f5bb5" />
  </svg>
);
const SyncCheck = () => (
  <svg width="18" height="18" viewBox="0 0 18 18" fill="none" stroke="#2f8f4e" strokeWidth="1.300">
    <circle cx="9" cy="9" r="8" />
    <path d="M5.500 9l2.500 3 4.500-6" />
  </svg>
);
const DetailsView = () => (
  <svg width="22" height="22" viewBox="0 0 22 22" fill="none" stroke="#5a6f84">
    <path d="M1 1h4v5H1zM1 8.500h4v5H1zM1 16h4v5H1z" />
    <path d="M8 3h13M8 5.500h10M8 11h13M8 18h13M8 14h10" />
  </svg>
);

const treeRows = ['0400-env', '0500-arch', '0600-trfc', '0700-elec', '0800-geo', '0900-brdg-str', '1000-prop', '1100-dstrct'];
const sideIcons = [HomeIcon, UploadTrayIcon, MonitorEditIcon, DocsIcon, CommentCheckIcon, EyeIcon, CubeIcon, InfoBadgeIcon, FlagIcon, ChartIcon];
const files = [
  { name: '20211020_confidentiality_undertaking_crr...', Icon: PdfIcon },
  { name: '20220509_CRRP_ProgramManagementPl...', Icon: PdfIcon },
  { name: '20221020.txt', Icon: TxtIcon },
  { name: '20221205.txt', Icon: TxtIcon },
  { name: 'crrp_dc_mem_001_dc-systems-review.docx', Icon: WordIcon },
  { name: 'CRRP_dft_Researcher_DRAFT_v_2.docx', Icon: WordIcon },
];

function ExplorerWindow() {
  return (
    <Explorer>
      <ExTitle>
        <QuickBtn $mr={12}><YellowFolder /></QuickBtn>
        <VSep $mr={19} />
        <QuickBtn $mr={16}><CheckDoc /></QuickBtn>
        <QuickBtn $mr={15}><YellowFolder /></QuickBtn>
        <QuickBtn $mr={15}><QuickCaret /></QuickBtn>
        <VSep $mr={7} />
        <ExPath>C:\Users\elefebvre\OneDrive - Stantec\Desktop\O...</ExPath>
        <ExWinBtns>
          <ExWinBtn><ThinDash color="#7a7a7a" /></ExWinBtn>
          <ExWinBtn><ThinSquare /></ExWinBtn>
          <ExWinBtn><ThinX color="#7a7a7a" /></ExWinBtn>
        </ExWinBtns>
      </ExTitle>
      <ExTabs>
        <ExTab $w={84} $file>File</ExTab>
        <ExTab $w={81} $on>Home</ExTab>
        <ExTab $w={84}>Share</ExTab>
        <ExTab $w={74}>View</ExTab>
        <ExTabEnd>
          <ChevronUp size={24} strokeWidth={1.400} />
          <HelpDot>?</HelpDot>
        </ExTabEnd>
      </ExTabs>
      <Ribbon>
        <RGroup $w={265}>
          <RTools $pl={4}>
            <LargeTool $w={100} $dim>
              <ToolIcon><Pin /></ToolIcon>
              Pin to Quick<br />access
            </LargeTool>
            <LargeTool $w={52}><ToolIcon><CopyDocs /></ToolIcon>Copy</LargeTool>
            <LargeTool $w={72} $dim><ToolIcon><Clipboard /></ToolIcon>Paste</LargeTool>
            <SmallCol $w={22} $top={3}>
              <SmallTool $h={32}><Scissors /></SmallTool>
              <SmallTool $h={32}><CopyPath /></SmallTool>
              <SmallTool $h={32}><ShortcutBoard /></SmallTool>
            </SmallCol>
          </RTools>
          <RLabel>Clipboard</RLabel>
        </RGroup>
        <RGroup $w={116}>
          <RTools>
            <SmallCol $w={55} $top={9} $pl={11} $line>
              <SmallTool $h={44} $gap={5}><MoveTo /><Caret /></SmallTool>
              <SmallTool $h={44} $gap={5}><MoveTo copy /><Caret /></SmallTool>
            </SmallCol>
            <SmallCol $w={60} $top={9} $pl={10}>
              <SmallTool $h={44} $gap={9}><RedX /><Caret /></SmallTool>
              <SmallTool $h={44}><Rename /></SmallTool>
            </SmallCol>
          </RTools>
          <RLabel $nudge={4}>Organize</RLabel>
        </RGroup>
        <RGroup $w={119}>
          <RTools>
            <LargeTool $w={70}><ToolIcon><NewFolderIcon /></ToolIcon>New<br />folder</LargeTool>
            <SmallCol $w={48} $top={3}>
              <SmallTool $h={32}><NewItem /><Caret /></SmallTool>
              <SmallTool $h={32}><EasyAccess /><Caret /></SmallTool>
            </SmallCol>
          </RTools>
          <RLabel>New</RLabel>
        </RGroup>
        <RGroup $w={139}>
          <RTools>
            <LargeTool $w={88}>
              <ToolIcon><CheckDoc w={32} h={42} sw={2.400} /></ToolIcon>
              Properties
              <CaretRow><Caret /></CaretRow>
            </LargeTool>
            <SmallCol $w={50} $top={3}>
              <SmallTool $h={34}><Notepad /><Caret /></SmallTool>
              <SmallTool $h={33}><EditDoc /></SmallTool>
              <SmallTool $h={38}><HistoryFolder /></SmallTool>
            </SmallCol>
          </RTools>
          <RLabel>Open</RLabel>
        </RGroup>
        <SelectBtn>
          <SelectTile><TileIcon /></SelectTile>
          Select
          <CaretRow><Caret /></CaretRow>
        </SelectBtn>
      </Ribbon>
      <ExAddress>
        <NavArrow $w={60}><ArrowLeft size={22} strokeWidth={2.200} /></NavArrow>
        <NavArrow $w={30} $color="#c4c4c4"><ArrowRight size={22} strokeWidth={2.200} /></NavArrow>
        <NavArrow $w={38}><ChevronDown size={13} strokeWidth={2.400} /></NavArrow>
        <NavArrow $w={24}><ArrowUpThin /></NavArrow>
        <NavArrow $w={6} />
        <PathBox>
          <PathMain>
            <YellowFolder />
            <PathBit $ml={13}>«</PathBit>
            <PathBit $ml={16}>Ongoi...</PathBit>
            <PathBit $ml={13}><ChevronRight size={15} strokeWidth={2} color="#555" /></PathBit>
            <PathBit $ml={8}>CRRP-OE</PathBit>
            <PathChevron><ChevronDown size={20} strokeWidth={2.400} /></PathChevron>
          </PathMain>
          <PathRefresh><RotateCw size={22} strokeWidth={2.600} /></PathRefresh>
        </PathBox>
        <SearchField>
          <Search size={22} strokeWidth={1.200} />
          Search CRRP-OE
        </SearchField>
      </ExAddress>
      <Panes>
        <NavPane>
          <NavRow $pl={33}><NavIcon $w={32}><QuickStar /></NavIcon>Quick access</NavRow>
          <NavRow $pl={36}><NavIcon $w={41}><DocumentsIcon /></NavIcon>Documents<NavPin><Pin size={16} color="#a5abb2" /></NavPin></NavRow>
          <NavRow $pl={36}><NavIcon $w={41}><DownloadIcon /></NavIcon>Downloads<NavPin><Pin size={16} color="#a5abb2" /></NavPin></NavRow>
          <NavRow $pl={36}><NavIcon $w={41}><PicturesIcon /></NavIcon>Pictures<NavPin><Pin size={16} color="#a5abb2" /></NavPin></NavRow>
          <NavRow $pl={36}><NavIcon $w={41}><YellowFolder w={15} h={21} /></NavIcon>CRRP-OE</NavRow>
          <NavRow $pl={36}><NavIcon $w={41}><YellowFolder w={15} h={21} /></NavIcon>Discipline</NavRow>
          <NavRow $pl={36}><NavIcon $w={41}><YellowFolder w={15} h={21} /></NavIcon></NavRow>
        </NavPane>
        <VScroll $w={24} $h={251}>
          <ScrollEnd><ChevronUp size={16} strokeWidth={3} /></ScrollEnd>
          <VThumb />
          <ScrollGap />
          <ScrollEnd><ChevronDown size={16} strokeWidth={3} /></ScrollEnd>
        </VScroll>
        <FilesArea>
          <FilesTop>
            <FilesList>
              <SortMark><ChevronUp size={16} strokeWidth={1.200} /></SortMark>
              <ColHead>
                <ColName>Name</ColName>
                <ColStatus>Status</ColStatus>
              </ColHead>
              {files.map((f, i) => (
                <FileRow key={f.name} $first={i === 0 ? 9 : 0}>
                  <FileIcon><f.Icon /></FileIcon>
                  <FileName>{f.name}</FileName>
                  <SyncCheck />
                </FileRow>
              ))}
            </FilesList>
            <VScroll $w={25} $h={225}>
              <ScrollEnd><ChevronUp size={16} strokeWidth={3} /></ScrollEnd>
              <VThumb />
              <ScrollGap />
              <ScrollEnd><ChevronDown size={16} strokeWidth={3} /></ScrollEnd>
            </VScroll>
          </FilesTop>
          <HScroll>
            <HEnd><ChevronLeft size={16} strokeWidth={3} /></HEnd>
            <HThumb />
            <ScrollGap />
            <HEnd><ChevronRight size={16} strokeWidth={3} /></HEnd>
          </HScroll>
        </FilesArea>
      </Panes>
      <ExStatus>
        <StatusCell $pl={22} $pr={17}>38 items</StatusCell>
        <StatusCell $pl={17} $pr={17}>1 item selected&nbsp;&nbsp;199 bytes</StatusCell>
        <StatusCell $pl={17} $pr={17}>Available on this device</StatusCell>
        <ViewToggles>
          <ViewToggle $w={33} $on><DetailsView /></ViewToggle>
          <ViewToggle $w={33}><PicturesIcon /></ViewToggle>
        </ViewToggles>
      </ExStatus>
    </Explorer>
  );
}

export default function App() {
  return (
    <Screen>
      <Global />
      <TabStrip>
        <Tab>
          <Logo size={24} />
          <TabTitle>ProjectWise 365</TabTitle>
          <TabClose><X size={18} strokeWidth={2.400} /></TabClose>
        </Tab>
        <NewTab><Plus size={24} strokeWidth={2.400} /></NewTab>
        <WindowButtons>
          <WinBtn><ThinV /></WinBtn>
          <WinBtn><ThinDash /></WinBtn>
          <WinBtn><RestoreIcon /></WinBtn>
          <WinBtn><ThinX /></WinBtn>
        </WindowButtons>
      </TabStrip>
      <BrowserBar>
        <BarBtn><ArrowLeft size={24} strokeWidth={2} /></BarBtn>
        <BarBtn $color="#b5b8bc"><ArrowRight size={24} strokeWidth={2} /></BarBtn>
        <BarBtn><RotateCw size={22} strokeWidth={2} /></BarBtn>
        <BarBtn><HomeOutline /></BarBtn>
        <Omnibox>
          <Lock size={16} fill="#5f6368" strokeWidth={2.400} />
          <Url><b>projectwise365.bentley.com</b>/cdaf89a3-7177-4b7e-bd1b-ae759d4ecd33/documents/documents-connections</Url>
          <BarBtn><ChromeShare /></BarBtn>
          <BarBtn><Star size={22} strokeWidth={1.800} /></BarBtn>
        </Omnibox>
        <BarBtn><Puzzle /></BarBtn>
        <BarBtn><SidePanel /></BarBtn>
        <BarBtn><Avatar><ProfileIcon /></Avatar></BarBtn>
        <BarBtn><DarkMenu /></BarBtn>
      </BrowserBar>
      <AppHeader>
        <HeaderStrip />
        <LogoBox><Logo /></LogoBox>
        <HelpCircle>?</HelpCircle>
        <UserCircle>EL</UserCircle>
        <UserCaret />
        <Kebab><i /><i /><i /></Kebab>
      </AppHeader>
      <Main>
        <SideNav>
          <SideToggle><ChevronRight size={15} strokeWidth={2.600} /></SideToggle>
          {sideIcons.map((Icon, i) => (
            <SideItem key={i} $active={i === 3}><Icon /></SideItem>
          ))}
        </SideNav>
        <TreePanel>
          <TreeThumb />
          {treeRows.map((name) => (
            <TreeRow key={name}>
              <TreeChevron><ChevronRight size={20} strokeWidth={1.500} /></TreeChevron>
              <TreeFolder><TreeFolderIcon /></TreeFolder>
              {name}
            </TreeRow>
          ))}
        </TreePanel>
        <Gutter />
        <Content>
          <TitleRow>
            <FolderTitle>02_objectives</FolderTitle>
            <ViewLabel><b>View:</b> Global</ViewLabel>
          </TitleRow>
          <ToolRow>
            <BtnGroup $gap={0}>
              <ToolBtn $shift={6}><RightBlockArrow /></ToolBtn>
              <ToolBtn><DotsIcon /></ToolBtn>
            </BtnGroup>
            <SearchBox>
              <SearchText>
                <span>Search 02_objectives and all subfolders</span>
                <Search size={26} strokeWidth={2.400} color="#5f6b76" />
              </SearchText>
              <SearchCaret />
            </SearchBox>
            <BtnGroup $gap={14}>
              <ToolBtn><SyncIcon /></ToolBtn>
              <ToolBtn><InfoItalic /></ToolBtn>
              <ToolBtn><ColumnsIcon /><CornerMark /></ToolBtn>
              <ToolBtn><ActiveBar /><SwapIcon /></ToolBtn>
              <ToolBtn><DotsIcon /></ToolBtn>
            </BtnGroup>
          </ToolRow>
          <TableHead>
            <span>Description</span>
            <span>File Name</span>
            <span>File Size</span>
          </TableHead>
          <Empty>
            <BigFolder />
            <EmptyLine $top={56}>No items are at this level. <a>Go to parent</a></EmptyLine>
            <EmptyLine $top={38}>Use the <InlinePlus><Plus size={24} strokeWidth={2.600} /></InlinePlus> New button to <a>upload folders and files</a>.</EmptyLine>
          </Empty>
        </Content>
      </Main>
      <StatusTip>https://projectwise365.bentley.com/cdaf89a3-7177-4b7e-bd1b-ae759d4ecd33/dashboard</StatusTip>
      <ExplorerWindow />
    </Screen>
  );
}
